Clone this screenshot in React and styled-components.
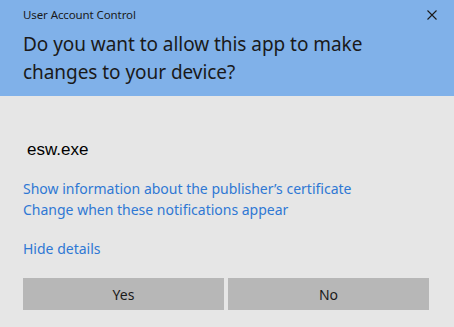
import React from 'react';
import styled, { createGlobalStyle } from 'styled-components';

const GlobalStyle = createGlobalStyle`
  html, body {
    margin: 0;
    padding: 0;
    background: #e6e6e6;
  }
  body {
    font-family: 'Noto Sans', 'Open Sans', sans-serif;
  }
`;

const Dialog = styled.div`
  width: 454px;
  height: 327px;
  display: flex;
  flex-direction: column;
  background: #e6e6e6;
`;

const Header = styled.div`
  height: 96px;
  box-sizing: border-box;
  background: #80b1e9;
  padding: 5px 0 0 23px;
`;

const TitleBar = styled.div`
  display: flex;
  justify-content: space-between;
  align-items: center;
  height: 18px;
`;

const Caption = styled.span`
  font-size: 11.5px;
  letter-spacing: -0.1px;
  color: #1a1a1a;
`;

const Close = styled.svg`
  width: 10px;
  height: 10px;
  margin-right: 17px;
  margin-top: 1px;
`;

const Question = styled.h1`
  margin: 7px 0 0;
  font-size: 19px;
  letter-spacing: -0.05px;
  font-weight: 400;
  line-height: 28px;
  color: #1a1a1a;
`;

const Body = styled.div`
  flex: 1;
  display: flex;
  flex-direction: column;
  padding: 0 25px 0 23px;
`;

const AppName = styled.div`
  margin: 44px 0 0 4px;
  font-family: 'Liberation Sans', Arial, sans-serif;
  font-size: 17px;
  line-height: 20px;
  color: #000;
`;

const Links = styled.div`
  display: flex;
  flex-direction: column;
  margin-top: 18px;
`;

const Link = styled.a`
  font-size: 14px;
  line-height: 21px;
  color: #2f78d4;
  cursor: pointer;
  margin-top: ${(p) => p.$gap || 0}px;
`;

const Buttons = styled.div`
  display: grid;
  grid-template-columns: 201px 201px;
  gap: 4px;
  margin-top: 19px;
`;

const Button = styled.button`
  height: 32px;
  border: none;
  background: #b7b7b7;
  font-family: 'Noto Sans', 'Open Sans', sans-serif;
  font-size: 14px;
  color: #1a1a1a;
  padding: 0;
`;

const App = () => (
  <Dialog>
    <GlobalStyle />
    <Header>
      <TitleBar>
        <Caption>User Account Control</Caption>
        <Close viewBox="0 0 10 10">
          <path d="M0.5 0.5 L9.5 9.5 M9.5 0.5 L0.5 9.5" stroke="#1a1a1a" strokeWidth="1.1" fill="none" />
        </Close>
      </TitleBar>
      <Question>
        Do you want to allow this app to make
        <br />
        changes to your device?
      </Question>
    </Header>
    <Body>
      <AppName>esw.exe</AppName>
      <Links>
        <Link>Show information about the publisher’s certificate</Link>
        <Link>Change when these notifications appear</Link>
        <Link $gap={18}>Hide details</Link>
      </Links>
      <Buttons>
        <Button>Yes</Button>
        <Button>No</Button>
      </Buttons>
    </Body>
  </Dialog>
);

export default App;
